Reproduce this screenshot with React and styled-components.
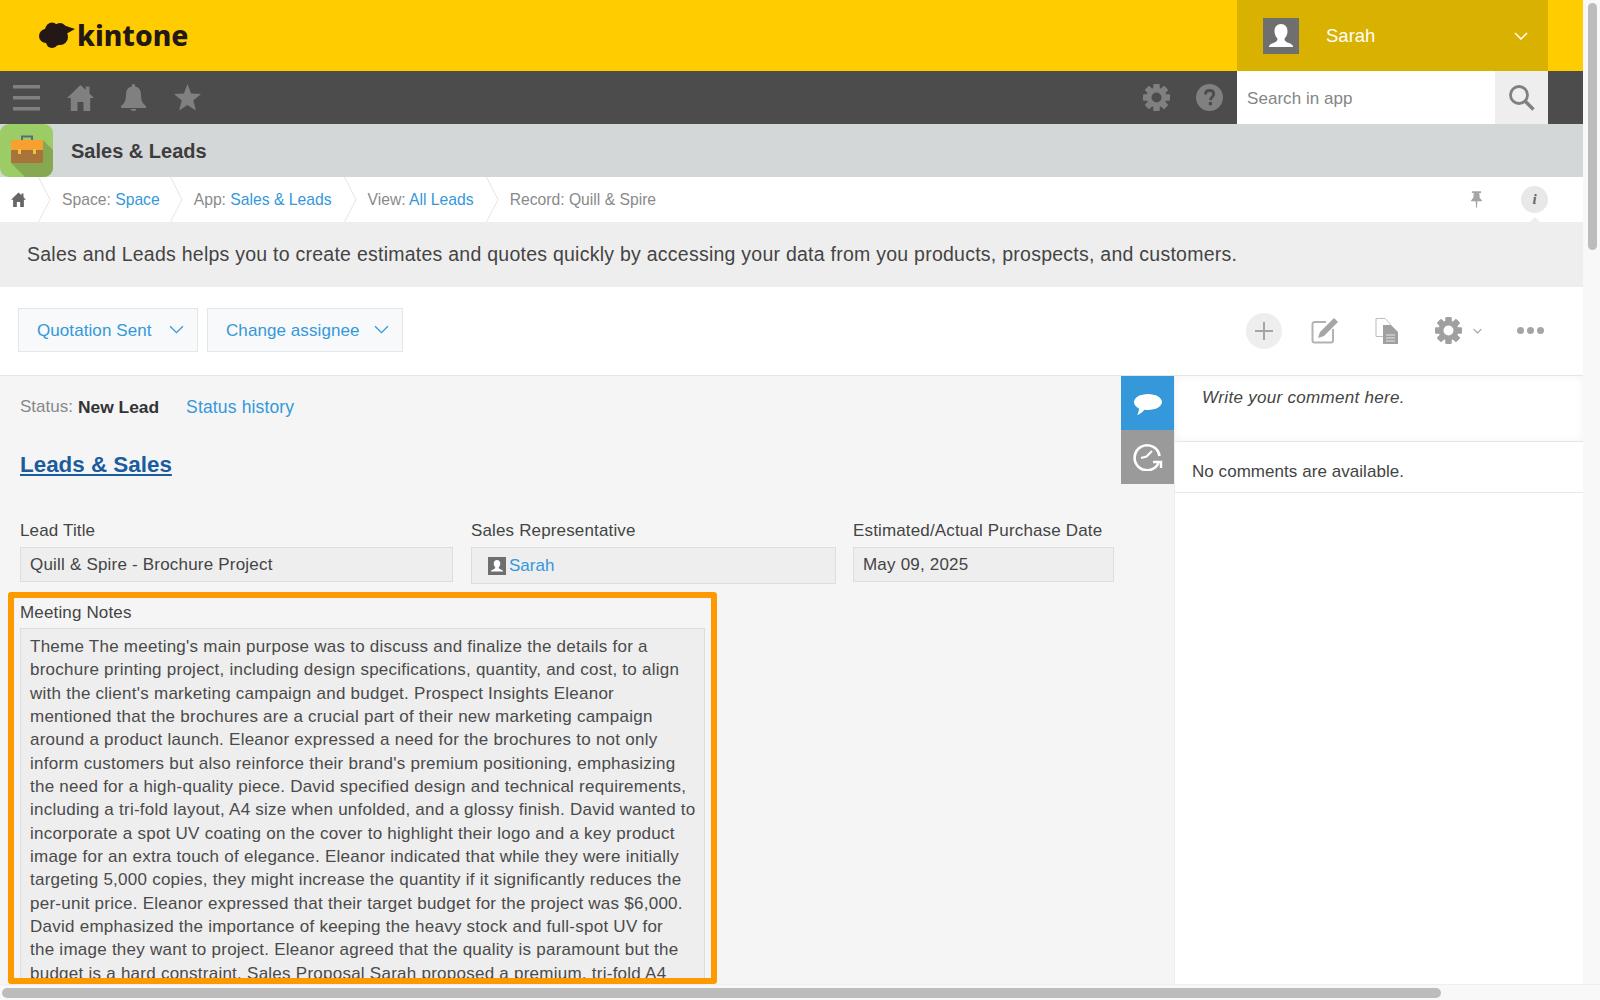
import React from 'react'
import styled, { createGlobalStyle } from 'styled-components'

const GlobalStyle = createGlobalStyle`
  html, body { margin: 0; padding: 0; background: #fff; overflow: hidden; }
  body { font-family: "Liberation Sans", Arial, sans-serif; color: #333; }
  * { box-sizing: border-box; }
`

const noteLines = [
  "Theme The meeting's main purpose was to discuss and finalize the details for a",
  'brochure printing project, including design specifications, quantity, and cost, to align',
  "with the client's marketing campaign and budget. Prospect Insights Eleanor",
  'mentioned that the brochures are a crucial part of their new marketing campaign',
  'around a product launch. Eleanor expressed a need for the brochures to not only',
  "inform customers but also reinforce their brand's premium positioning, emphasizing",
  'the need for a high-quality piece. David specified design and technical requirements,',
  'including a tri-fold layout, A4 size when unfolded, and a glossy finish. David wanted to',
  'incorporate a spot UV coating on the cover to highlight their logo and a key product',
  'image for an extra touch of elegance. Eleanor indicated that while they were initially',
  'targeting 5,000 copies, they might increase the quantity if it significantly reduces the',
  'per-unit price. Eleanor expressed that their target budget for the project was $6,000.',
  'David emphasized the importance of keeping the heavy stock and full-spot UV for',
  'the image they want to project. Eleanor agreed that the quality is paramount but the',
  'budget is a hard constraint. Sales Proposal Sarah proposed a premium, tri-fold A4',
]

const Screen = styled.div`
  width: 1600px;
  height: 1000px;
  display: grid;
  grid-template-columns: 1583px 17px;
  grid-template-rows: 984px 16px;
  background: #f8f8f8;
  overflow: hidden;
`

const Page = styled.div`
  display: flex;
  flex-direction: column;
  overflow: hidden;
  background: #fff;
`

const VTrack = styled.div`
  padding: 3px 0 0 5px;
  background: #f8f8f8;
`

const VThumb = styled.div`
  width: 9px;
  height: 247px;
  border-radius: 5px;
  background: #bcbcbc;
`

const HTrack = styled.div`
  grid-column: 1 / 3;
  padding: 3px 0 0 2px;
  background: #f8f8f8;
  border-top: 1px solid #efefef;
`

const HThumb = styled.div`
  width: 1439px;
  height: 10px;
  border-radius: 5px;
  background: #bcbcbc;
`

const Header = styled.header`
  height: 71px;
  flex: none;
  display: flex;
  justify-content: space-between;
  background: #ffcc00;
`

const Logo = styled.div`
  display: flex;
  align-items: center;
  gap: 2px;
  padding: 0 0 1px 39px;
`

const LogoText = styled.span`
  font-family: "Noto Sans", sans-serif;
  font-weight: 800;
  font-size: 28.2px;
  color: #231815;
`

const UserMenu = styled.div`
  width: 311px;
  margin-right: 35px;
  display: flex;
  align-items: center;
  padding: 0 20px 0 26px;
  background: #d9b100;
`

const Avatar = styled.span`
  width: ${(p) => p.$size}px;
  height: ${(p) => p.$size}px;
  flex: none;
  display: inline-flex;
  background: #6f6f6f;
`

const UserName = styled.span`
  flex: 1;
  padding-left: 27px;
  font-size: 18.5px;
  color: #fff;
`

const GlobalNav = styled.nav`
  height: 53px;
  flex: none;
  display: flex;
  align-items: center;
  background: #4c4c4c;
`

const NavLeft = styled.div`
  flex: 1;
  display: flex;
  align-items: center;
  gap: 26.5px;
  padding-left: 13px;
`

const NavRight = styled.div`
  display: flex;
  align-items: center;
  gap: 26px;
  padding-right: 14px;
`

const SearchBox = styled.div`
  width: 311px;
  height: 53px;
  margin-right: 35px;
  display: flex;
  background: #fff;
`

const SearchText = styled.div`
  flex: 1;
  display: flex;
  align-items: center;
  padding: 2px 0 0 10px;
  font-size: 17px;
  letter-spacing: 0.05px;
  color: #858585;
`

const SearchButton = styled.div`
  width: 53px;
  display: flex;
  align-items: center;
  justify-content: center;
  background: #eeeeee;
`

const AppBar = styled.div`
  height: 53px;
  flex: none;
  display: flex;
  align-items: center;
  gap: 18px;
  background: #d3d7d8;
`

const AppTitle = styled.h1`
  margin: 0;
  padding-top: 2px;
  font-size: 20px;
  font-weight: 700;
  color: #3d3d3d;
`

const Breadcrumb = styled.div`
  height: 45px;
  flex: none;
  display: flex;
  align-items: center;
  background: #fff;
`

const Crumb = styled.span`
  padding: 1px ${(p) => p.$right || 12}px 0 11px;
  font-size: 15.7px;
  color: #8a8a8a;
  white-space: nowrap;
`

const CrumbHome = styled.span`
  display: flex;
  padding: 0 12px 0 11px;
`

const CrumbLink = styled.a`
  color: #3498db;
`

const CrumbTools = styled.div`
  margin-left: auto;
  display: flex;
  align-items: center;
  gap: 39px;
  padding-right: 35px;
`

const InfoBadge = styled.span`
  position: relative;
  width: 27px;
  height: 27px;
  border-radius: 50%;
  display: flex;
  align-items: center;
  justify-content: center;
  background: #e8e8e8;
  color: #666;
  font-family: "Liberation Serif", serif;
  font-style: italic;
  font-weight: 700;
  font-size: 15px;
  &::after {
    content: '';
    position: absolute;
    left: 7px;
    top: 31px;
    border: 7px solid transparent;
    border-top: 0;
    border-bottom-color: #eeeeee;
  }
`

const Description = styled.div`
  height: 65px;
  flex: none;
  display: flex;
  align-items: center;
  padding-left: 27px;
  font-size: 19.5px;
  letter-spacing: 0.25px;
  color: #444;
  background: #eeeeee;
`

const Toolbar = styled.div`
  height: 89px;
  flex: none;
  display: flex;
  align-items: center;
  padding: 0 39px 1px 18px;
  border-bottom: 1px solid #e6e6e6;
  background: #fff;
`

const StatusButtons = styled.div`
  flex: 1;
  display: flex;
  gap: 9px;
  margin-top: -2px;
`

const StatusButton = styled.button`
  width: ${(p) => p.$w}px;
  height: 44px;
  display: flex;
  align-items: center;
  justify-content: space-between;
  padding: 0 13px 0 18px;
  font: inherit;
  font-size: 17px;
  letter-spacing: 0.08px;
  color: #3498db;
  background: #f7f9fa;
  border: 1px solid #e3e7e8;
`

const ButtonText = styled.span`
  padding-top: 3px;
`

const ToolIcons = styled.div`
  display: flex;
  align-items: center;
`

const PlusCircle = styled.span`
  width: 36px;
  height: 36px;
  margin-right: 29px;
  border-radius: 50%;
  display: flex;
  align-items: center;
  justify-content: center;
  background: #eeeeee;
`

const ToolGap = styled.span`
  display: flex;
  align-items: center;
  margin-right: ${(p) => p.$m}px;
`

const Body = styled.div`
  flex: 1;
  min-height: 0;
  display: flex;
`

const RecordPane = styled.main`
  width: 1121px;
  flex: none;
  overflow: hidden;
  background: #f5f5f5;
  padding-top: 21px;
`

const StatusLine = styled.div`
  display: flex;
  height: 20px;
  align-items: center;
  padding-left: 20px;
  font-size: 17px;
  color: #888;
`

const StatusValue = styled.strong`
  margin-left: 5px;
  font-size: 17.4px;
  color: #333;
`

const StatusLink = styled.a`
  margin-left: 27px;
  font-size: 17.5px;
  letter-spacing: 0.15px;
  color: #3498db;
`

const SectionTitle = styled.h2`
  margin: 33px 0 0 20px;
  height: 30px;
  line-height: 30px;
  font-size: 22.4px;
  font-weight: 700;
  color: #1b5c9e;
  text-decoration: underline;
`

const FieldRow = styled.div`
  display: flex;
  margin-top: 41px;
  padding-left: 20px;
`

const Field = styled.div`
  width: ${(p) => p.$w}px;
  flex: none;
  margin-right: ${(p) => p.$gap || 18}px;
`

const Label = styled.div`
  height: 20px;
  line-height: 20px;
  font-size: 17px;
  letter-spacing: 0.15px;
  color: #444;
`

const Value = styled.div`
  height: ${(p) => p.$h || 35}px;
  margin-top: 6px;
  display: flex;
  align-items: center;
  gap: 3px;
  padding-left: ${(p) => p.$pad || 9}px;
  font-size: 17px;
  letter-spacing: 0.2px;
  color: #444;
  background: #eeeeee;
  border: 1px solid #dddddd;
`

const UserLink = styled.a`
  letter-spacing: 0;
  color: #3498db;
`

const Highlight = styled.section`
  width: 709px;
  height: 392px;
  margin: 8px 0 0 8px;
  padding: 5px 6px 0;
  overflow: hidden;
  border: 6px solid #ff9900;
  border-radius: 3px;
`

const Notes = styled.div`
  margin-top: 5px;
  padding: 6px 9px 0;
  background: #eeeeee;
  border: 1px solid #dddddd;
  font-size: 17px;
  letter-spacing: 0.25px;
  line-height: 23.33px;
  color: #4a4a4a;
`

const NoteLine = styled.div`
  white-space: nowrap;
`

const Tabs = styled.div`
  width: 53px;
  flex: none;
  background: #f5f5f5;
`

const Tab = styled.div`
  height: 54px;
  display: flex;
  align-items: center;
  justify-content: center;
  padding-top: ${(p) => p.$nudge || 0}px;
  background: ${(p) => p.$bg};
`

const CommentPane = styled.aside`
  flex: 1;
  background: #fff;
  border-left: 1px solid #eeeeee;
`

const CommentInput = styled.div`
  height: 66px;
  padding: 12px 0 0 27px;
  font-size: 17px;
  letter-spacing: 0.3px;
  line-height: 20px;
  font-style: italic;
  color: #444;
  box-shadow: inset 0 0 8px #f3f3f3;
  border-bottom: 1px solid #e6e6e6;
`

const CommentEmpty = styled.div`
  height: 51px;
  padding: 20px 0 0 17px;
  font-size: 17px;
  letter-spacing: 0.05px;
  line-height: 20px;
  color: #444;
  border-bottom: 1px solid #e8e8e8;
`

const CloudLogo = () => (
  <svg width="36" height="26" viewBox="0 0 36 26" fill="#231815">
    <circle cx="15" cy="13" r="11" />
    <circle cx="7" cy="14" r="7" />
    <circle cx="13" cy="7" r="6.500" />
    <circle cx="21" cy="7.500" r="6.500" />
    <circle cx="21" cy="15" r="8" />
    <circle cx="13" cy="20" r="6" />
    <path d="M24 3l12 4-9 5z" />
  </svg>
)

const PersonIcon = ({ size }) => (
  <svg width={size} height={size} viewBox="0 0 36 36">
    <path fill="#fff" d="M18 6c-4 0-6.500 3-6.500 7 0 3 1 5.500 3 7.500 0 2-1 3-3 4-2 .800-4.500 1.500-5.500 3.500v1h24v-1c-1-2-3.500-2.700-5.500-3.500-2-1-3-2-3-4 2-2 3-4.500 3-7.500 0-4-2.500-7-6.500-7z" />
  </svg>
)

const Chevron = ({ w = 14, h = 8, color = '#fff', sw = 1.5 }) => (
  <svg width={w} height={h} viewBox="0 0 14 8">
    <polyline points="1,1 7,7 13,1" fill="none" stroke={color} strokeWidth={sw} />
  </svg>
)

const Burger = () => (
  <svg width="27" height="27" viewBox="0 0 27 27" fill="#808080">
    <rect y="1" width="27" height="3.500" />
    <rect y="12" width="27" height="3.500" />
    <rect y="23" width="27" height="3.500" />
  </svg>
)

const HomeIcon = ({ size = 27, color = '#808080' }) => (
  <svg width={size} height={size} viewBox="0 0 27 27" fill={color}>
    <path d="M13.500 1L0 14h3.800v13h6.700v-9h6v9h6.700V14H27l-4.500-4.400V2.500h-3.700v3.500z" />
  </svg>
)

const BellIcon = () => (
  <svg width="27" height="27" viewBox="0 0 27 27" fill="#808080">
    <path d="M13.500 0c-1 0-1.700.800-1.700 1.800v.7C7.800 3.300 6 6.500 6 10.500c0 6-1.500 9-5 11.500v2h25v-2c-3.500-2.500-5-5.500-5-11.500 0-4-1.800-7.200-5.800-8v-.7c0-1-.7-1.800-1.700-1.800zM10.500 25c.3 1.300 1.500 2 3 2s2.700-.7 3-2z" />
  </svg>
)

const StarIcon = () => (
  <svg width="27" height="27" viewBox="0 0 27 27" fill="#808080">
    <path d="M13.500 0l3.600 9.500 9.900.6-7.700 6.300 2.600 10-8.400-5.500-8.400 5.500 2.600-10L0 10.100l9.900-.6z" />
  </svg>
)

const GearIcon = ({ size = 27, color = '#808080' }) => (
  <svg width={size} height={size} viewBox="0 0 27 27">
    <g fill={color}>
      {[0, 45, 90, 135, 180, 225, 270, 315].map((a) => (
        <rect key={a} x="10.500" y="0" width="6" height="27" rx="1" transform={`rotate(${a} 13.500 13.500)`} />
      ))}
      <circle cx="13.500" cy="13.500" r="10" />
    </g>
    <circle cx="13.500" cy="13.500" r="5" fill={color === '#808080' ? '#4c4c4c' : '#fff'} />
  </svg>
)

const HelpIcon = () => (
  <svg width="27" height="27" viewBox="0 0 27 27">
    <circle cx="13.500" cy="13.500" r="13.500" fill="#808080" />
    <path d="M9.500 10.500c0-2.500 1.800-4 4.200-4s4 1.400 4 3.500c0 3-3.300 3-3.300 6.300" fill="none" stroke="#4c4c4c" strokeWidth="2.800" />
    <rect x="12.800" y="18" width="3.200" height="3.200" fill="#4c4c4c" />
  </svg>
)

const SearchIcon = () => (
  <svg width="27" height="27" viewBox="0 0 27 27" fill="none" stroke="#808080">
    <circle cx="11" cy="11" r="8.500" strokeWidth="2.800" />
    <line x1="17" y1="17" x2="25.500" y2="25.500" strokeWidth="3.400" />
  </svg>
)

const AppIcon = () => (
  <svg width="53" height="53" viewBox="0 0 53 53">
    <rect width="53" height="53" rx="9" fill="#9ccc65" />
    <path d="M43 16l10 10v18a9 9 0 0 1-9 9H25L11 39h32z" fill="#85a850" />
    <path d="M22 16v-3.500h10V16" fill="none" stroke="#5f6a72" strokeWidth="2" />
    <rect x="11" y="16" width="32" height="11" fill="#f7a030" />
    <rect x="11" y="26" width="32" height="13" rx="1" fill="#a8743a" />
    <rect x="18" y="25" width="3" height="5" fill="#f4c040" />
    <rect x="33" y="25" width="3" height="5" fill="#f4c040" />
  </svg>
)

const Separator = () => (
  <svg width="13" height="45" viewBox="0 0 13 45" style={{ flex: 'none' }}>
    <polyline points="0.500,0 12,22.500 0.500,45" fill="none" stroke="#e4e4e4" strokeWidth="1" />
  </svg>
)

const PinIcon = () => (
  <svg width="11" height="17" viewBox="0 0 12 18" fill="#a5a5a5">
    <path d="M1 0h10v2H9l.5 5L12 10v1H7l-.6 7h-.8L5 11H0v-1l2.500-3L3 2H1z" />
  </svg>
)

const PlusIcon = () => (
  <svg width="18" height="18" viewBox="0 0 18 18" stroke="#a5a5a5" strokeWidth="2">
    <line x1="9" y1="0" x2="9" y2="18" />
    <line x1="0" y1="9" x2="18" y2="9" />
  </svg>
)

const EditIcon = () => (
  <svg width="27" height="26" viewBox="0 0 27 26">
    <path d="M15 4H3.500A2 2 0 0 0 1.500 6v16.500a2 2 0 0 0 2 2H20a2 2 0 0 0 2-2V11" fill="none" stroke="#b3b3b3" strokeWidth="2" />
    <path d="M23 0l4 4-14 14-6 2 2-6z" fill="#a5a5a5" />
  </svg>
)

const DocIcon = () => (
  <svg width="24" height="26" viewBox="0 0 24 26">
    <path d="M1 .5h9l5 5v13H1z" fill="#fff" stroke="#bdbdbd" />
    <path d="M8 7h8l7 7v12H8z" fill="#a0a0a0" />
    <path d="M11 17h9M11 20h9M11 23h9" stroke="#e6e6e6" />
  </svg>
)

const DotsIcon = () => (
  <svg width="27" height="7" viewBox="0 0 27 7" fill="#a5a5a5">
    <circle cx="3.500" cy="3.500" r="3.500" />
    <circle cx="13.500" cy="3.500" r="3.500" />
    <circle cx="23.500" cy="3.500" r="3.500" />
  </svg>
)

const BubbleIcon = () => (
  <svg width="28" height="22" viewBox="0 0 28 22" fill="#fff">
    <path d="M14 0c7.700 0 14 3.600 14 8s-6.300 8-14 8c-1.300 0-2.500-.1-3.700-.3C8.500 18 6 20.500 3 21c1-1.500 2-4 2-6.500C2 13 0 10.700 0 8c0-4.400 6.300-8 14-8z" />
  </svg>
)

const HistoryIcon = () => (
  <svg width="30" height="28" viewBox="0 0 30 28" fill="none" stroke="#fff" strokeWidth="2.600">
    <path d="M25.500 20A12.500 12.500 0 1 1 26.500 13" />
    <path d="M20 19h8v6" strokeWidth="2.400" />
    <path d="M8 15l5.500-1.500L19 8" strokeWidth="2" />
  </svg>
)

export default function App() {
  return (
    <>
      <GlobalStyle />
      <Screen>
        <Page>
          <Header>
            <Logo>
              <CloudLogo />
              <LogoText>kintone</LogoText>
            </Logo>
            <UserMenu>
              <Avatar $size={36}>
                <PersonIcon size={36} />
              </Avatar>
              <UserName>Sarah</UserName>
              <Chevron />
            </UserMenu>
          </Header>

          <GlobalNav>
            <NavLeft>
              <Burger />
              <HomeIcon />
              <BellIcon />
              <StarIcon />
            </NavLeft>
            <NavRight>
              <GearIcon />
              <HelpIcon />
            </NavRight>
            <SearchBox>
              <SearchText>Search in app</SearchText>
              <SearchButton>
                <SearchIcon />
              </SearchButton>
            </SearchBox>
          </GlobalNav>

          <AppBar>
            <AppIcon />
            <AppTitle>Sales &amp; Leads</AppTitle>
          </AppBar>

          <Breadcrumb>
            <CrumbHome>
              <HomeIcon size={15} color="#666" />
            </CrumbHome>
            <Separator />
            <Crumb $right={10}>
              Space: <CrumbLink>Space</CrumbLink>
            </Crumb>
            <Separator />
            <Crumb>
              App: <CrumbLink>Sales &amp; Leads</CrumbLink>
            </Crumb>
            <Separator />
            <Crumb>
              View: <CrumbLink>All Leads</CrumbLink>
            </Crumb>
            <Separator />
            <Crumb>Record: Quill &amp; Spire</Crumb>
            <CrumbTools>
              <PinIcon />
              <InfoBadge>i</InfoBadge>
            </CrumbTools>
          </Breadcrumb>

          <Description>
            Sales and Leads helps you to create estimates and quotes quickly by accessing your data from you products, prospects, and customers.
          </Description>

          <Toolbar>
            <StatusButtons>
              <StatusButton $w={180}>
                <ButtonText>Quotation Sent</ButtonText>
                <Chevron w={15} h={9} color="#3498db" sw={1.2} />
              </StatusButton>
              <StatusButton $w={196}>
                <ButtonText>Change assignee</ButtonText>
                <Chevron w={15} h={9} color="#3498db" sw={1.2} />
              </StatusButton>
            </StatusButtons>
            <ToolIcons>
              <PlusCircle>
                <PlusIcon />
              </PlusCircle>
              <ToolGap $m={37}>
                <EditIcon />
              </ToolGap>
              <ToolGap $m={36}>
                <DocIcon />
              </ToolGap>
              <ToolGap $m={11}>
                <GearIcon color="#a0a0a0" />
              </ToolGap>
              <ToolGap $m={35}>
                <Chevron w={9} h={6} color="#a0a0a0" sw={1.8} />
              </ToolGap>
              <DotsIcon />
            </ToolIcons>
          </Toolbar>

          <Body>
            <RecordPane>
              <StatusLine>
                Status:
                <StatusValue>New Lead</StatusValue>
                <StatusLink>Status history</StatusLink>
              </StatusLine>
              <SectionTitle>Leads &amp; Sales</SectionTitle>
              <FieldRow>
                <Field $w={433}>
                  <Label>Lead Title</Label>
                  <Value>Quill &amp; Spire - Brochure Project</Value>
                </Field>
                <Field $w={365} $gap={17}>
                  <Label>Sales Representative</Label>
                  <Value $h={37} $pad={16}>
                    <Avatar $size={18}>
                      <PersonIcon size={18} />
                    </Avatar>
                    <UserLink>Sarah</UserLink>
                  </Value>
                </Field>
                <Field $w={261}>
                  <Label>Estimated/Actual Purchase Date</Label>
                  <Value>May 09, 2025</Value>
                </Field>
              </FieldRow>
              <Highlight>
                <Label>Meeting Notes</Label>
                <Notes>
                  {noteLines.map((line) => (
                    <NoteLine key={line}>{line}</NoteLine>
                  ))}
                </Notes>
              </Highlight>
            </RecordPane>
            <Tabs>
              <Tab $bg="#3498db" $nudge={3}>
                <BubbleIcon />
              </Tab>
              <Tab $bg="#9a9a9a">
                <HistoryIcon />
              </Tab>
            </Tabs>
            <CommentPane>
              <CommentInput>Write your comment here.</CommentInput>
              <CommentEmpty>No comments are available.</CommentEmpty>
            </CommentPane>
          </Body>
        </Page>
        <VTrack>
          <VThumb />
        </VTrack>
        <HTrack>
          <HThumb />
        </HTrack>
      </Screen>
    </>
  )
}
